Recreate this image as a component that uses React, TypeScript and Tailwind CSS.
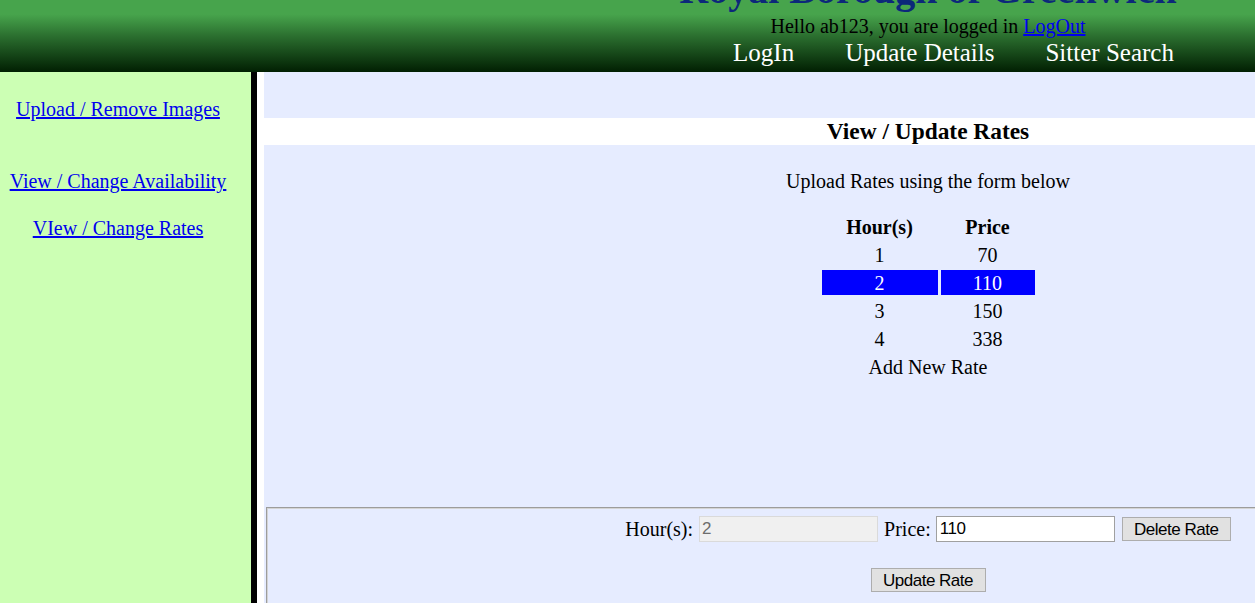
import React from "react";

const serif = { fontFamily: '"Liberation Serif", "Times New Roman", serif' };
const sans = { fontFamily: '"Liberation Sans", Arial, sans-serif' };

const rows: [string, string][] = [
  ["1", "70"],
  ["2", "110"],
  ["3", "150"],
  ["4", "338"],
];

export default function App() {
  return (
    <div className="relative w-[1255px] h-[603px] overflow-hidden bg-white text-black text-[20px]" style={serif}>
      <div className="w-[1592px]">
        {/* Header */}
        <header className="h-[72px] overflow-hidden bg-[linear-gradient(to_bottom,#47a44c_0%,#47a44c_20%,#2b6f2f_50%,#011f02_100%)]">
          <div className="ml-[264px] w-[1328px] text-center">
            <div className="mt-[-30px] h-[40px] leading-[40px] text-[40px] font-bold text-[#0c287a]">
              Royal Borough of Greenwich
            </div>
            <div className="mt-[5px] leading-[23px]">
              Hello ab123, you are logged in{" "}
              <a href="#" className="text-[#0000ee] underline">
                LogOut
              </a>
            </div>
            <nav className="mt-[1px] flex justify-center gap-[51px] pl-[51px] text-[25px] leading-[28px] text-white">
              <span>LogIn</span>
              <span>Update Details</span>
              <span>Sitter Search</span>
            </nav>
          </div>
        </header>

        {/* Body */}
        <div className="flex h-[531px] overflow-hidden">
          <aside className="w-[257px] shrink-0 bg-[#ccffb4] border-r-[6px] border-black pr-[15px] pt-[26px] text-center leading-[23px]">
            <div>
              <a href="#" className="text-[#0000ee] underline">
                Upload / Remove Images
              </a>
            </div>
            <div className="mt-[49px]">
              <a href="#" className="text-[#0000ee] underline">
                View / Change Availability
              </a>
            </div>
            <div className="mt-[24px]">
              <a href="#" className="text-[#0000ee] underline">
                VIew / Change Rates
              </a>
            </div>
          </aside>

          <div className="w-[7px] shrink-0 bg-white" />

          <main className="w-[1328px] shrink-0 bg-[#e6ecff]">
            <div className="h-[46px]" />
            <h3 className="h-[27px] bg-white text-center text-[23.4px] font-bold leading-[27px]">
              View / Update Rates
            </h3>
            <p className="mt-[25px] text-center leading-[23px]">Upload Rates using the form below</p>

            <div className="mt-[18px] flex justify-center">
              <div className="grid grid-cols-[116px_94px] gap-[3px] p-[3px] text-center leading-[26px]">
                <div className="h-[25px] font-bold">Hour(s)</div>
                <div className="h-[25px] font-bold">Price</div>
                {rows.map(([h, p]) => {
                  const sel = h === "2";
                  const cls = sel ? "h-[25px] bg-[#0000ff] text-white" : "h-[25px]";
                  return (
                    <React.Fragment key={h}>
                      <div className={cls}>{h}</div>
                      <div className={cls}>{p}</div>
                    </React.Fragment>
                  );
                })}
                <div className="col-span-2 h-[25px]">Add New Rate</div>
              </div>
            </div>

            <fieldset className="mx-[2px] mt-[125px] h-[140px] border border-[#9c9c9c] shadow-[inset_1px_1px_0_#d4d4d4] pt-[8px]">
              <div className="flex items-center justify-center h-[26px]">
                <label className="leading-[23px]">Hour(s):</label>
                <input
                  disabled
                  value="2"
                  readOnly
                  className="ml-[6px] h-[26px] w-[179px] border border-[#dadada] bg-[#f0f0f0] px-[2px] text-[17px] tracking-[-0.4px] text-[#6d6d6d]"
                  style={sans}
                />
                <label className="ml-[6px] leading-[23px]">Price:</label>
                <input
                  value="110"
                  readOnly
                  className="ml-[5px] h-[26px] w-[179px] border border-[#a0a0a0] bg-white px-[3px] text-[17px] tracking-[-0.4px] text-black outline-none"
                  style={sans}
                />
                <button
                  className="ml-[7px] h-[24px] w-[109px] border border-[#adadad] bg-[#e1e1e1] pt-[2px] text-[17px] tracking-[-0.5px] leading-[20px] text-black"
                  style={sans}
                >
                  Delete Rate
                </button>
              </div>
              <div className="mt-[26px] flex justify-center">
                <button
                  className="h-[24px] w-[115px] border border-[#adadad] bg-[#e1e1e1] pt-[2px] text-[17px] tracking-[-0.5px] leading-[20px] text-black"
                  style={sans}
                >
                  Update Rate
                </button>
              </div>
            </fieldset>
          </main>
        </div>
      </div>
    </div>
  );
}
